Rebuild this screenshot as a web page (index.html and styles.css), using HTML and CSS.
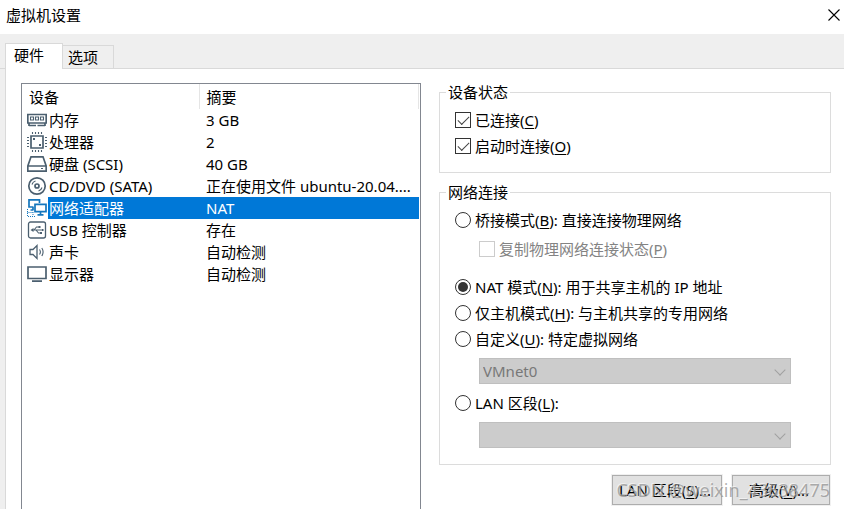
FILE: index.html
```html
<!DOCTYPE html>
<html lang="zh-CN">
<head>
    <meta charset="UTF-8">
    <meta name="viewport" content="width=device-width, initial-scale=1.0">
    <title>虚拟机设置</title>
    <link rel="stylesheet" href="styles.css">
</head>
<body>
    <div class="window">
        <header class="title-bar">
            <h1>虚拟机设置</h1>
            <button class="close-btn" type="button" aria-label="关闭">
                <svg width="12" height="12" viewBox="0 0 12 12"><path d="M0.5 0.5L11.5 11.5M11.5 0.5L0.5 11.5"/></svg>
            </button>
        </header>

        <nav class="tabs">
            <button class="tab active" type="button">硬件</button>
            <button class="tab" type="button">选项</button>
        </nav>

        <main class="panel">
            <!-- Device list -->
            <div class="device-list">
                <table>
                    <thead>
                        <tr><th class="col-device">设备</th><th>摘要</th></tr>
                    </thead>
                    <tbody>
                        <tr>
                            <td><div class="device">
                                <svg class="icon" viewBox="0 0 20 20"><path d="M0.800 4.500h18.400v8.500H0.800z"/><path class="thin" d="M3.500 7h3v3h-3zM8.500 7h3v3h-3zM13.500 7h3v3h-3z"/><path d="M2 15.500h7M10.500 15.500h7.500M2 13v3M18 13v3"/></svg>
                                <span>内存</span>
                            </div></td>
                            <td>3 GB</td>
                        </tr>
                        <tr>
                            <td><div class="device">
                                <svg class="icon" viewBox="0 0 20 20"><path d="M4 4h12v12H4z"/><path class="pins" d="M5.500 0v2M8.500 0v2M11.500 0v2M14.500 0v2M5.500 18v2M8.500 18v2M11.500 18v2M14.500 18v2M0 5.500h2M0 8.500h2M0 11.500h2M0 14.500h2M18 5.500h2M18 8.500h2M18 11.500h2M18 14.500h2"/><path class="fill" d="M6 6h2v2H6zM12 12h2v2h-2z"/></svg>
                                <span>处理器</span>
                            </div></td>
                            <td>2</td>
                        </tr>
                        <tr>
                            <td><div class="device">
                                <svg class="icon" viewBox="0 0 20 20"><path d="M0.800 12l3.200-9.200h12l3.200 9.200v5.200H0.800zM0.800 12h18.400"/><path class="thin" d="M14 14.500h2"/></svg>
                                <span>硬盘 (SCSI)</span>
                            </div></td>
                            <td>40 GB</td>
                        </tr>
                        <tr>
                            <td><div class="device">
                                <svg class="icon" viewBox="0 0 20 20"><circle cx="10" cy="10" r="8.200"/><circle cx="10" cy="10" r="2"/><path class="thin" d="M5 8.500a5 5 0 0 1 3.500-3.500M15 11.500a5 5 0 0 1-3.500 3.500"/></svg>
                                <span>CD/DVD (SATA)</span>
                            </div></td>
                            <td>正在使用文件 ubuntu-20.04....</td>
                        </tr>
                        <tr class="selected">
                            <td><div class="device">
                                <svg class="icon blue" viewBox="0 0 20 20"><path d="M6.500 9H2V1.800h10.500V5M6 9v3M3.500 12h3"/><path d="M8 6.300h11v7.400H8zM13.500 14v3M10.500 16.800h6"/><path class="dotted" d="M0.500 11v7.500H9M0.500 14.500h5.500M6 14v4"/></svg>
                                <span>网络适配器</span>
                            </div></td>
                            <td>NAT</td>
                        </tr>
                        <tr>
                            <td><div class="device">
                                <svg class="icon" viewBox="0 0 20 20"><rect class="frame" x="1.500" y="2" width="17" height="16" rx="2"/><path class="thin" d="M5 10h10.500M7 10l2.500-3H12M9 10l2.500 3H14"/><path class="fill" d="M3.500 10l3-2v4zM11.500 6h2v2h-2zM13 12h2v2h-2zM15 9h1.500v2H15z"/></svg>
                                <span>USB 控制器</span>
                            </div></td>
                            <td>存在</td>
                        </tr>
                        <tr>
                            <td><div class="device">
                                <svg class="icon" viewBox="0 0 20 20"><path class="frame" d="M3 7.500h3l4-4v13l-4-4H3z"/><path class="thin" d="M12.500 7.500q1.800 2.500 0 5M14.800 6q2.600 4 0 8"/></svg>
                                <span>声卡</span>
                            </div></td>
                            <td>自动检测</td>
                        </tr>
                        <tr>
                            <td><div class="device">
                                <svg class="icon" viewBox="0 0 20 20"><path d="M1 3h18v11.500H1zM5 17.200h10"/></svg>
                                <span>显示器</span>
                            </div></td>
                            <td>自动检测</td>
                        </tr>
                    </tbody>
                </table>
            </div>

            <!-- Settings for the selected device -->
            <form class="settings">
                <fieldset class="status-group">
                    <legend>设备状态</legend>
                    <label class="option"><input type="checkbox" checked><span>已连接(<u>C</u>)</span></label>
                    <label class="option"><input type="checkbox" checked><span>启动时连接(<u>O</u>)</span></label>
                </fieldset>

                <fieldset class="network-group">
                    <legend>网络连接</legend>
                    <label class="option"><input type="radio" name="network"><span>桥接模式(<u>B</u>): 直接连接物理网络</span></label>
                    <label class="option sub-option"><input type="checkbox" disabled><span>复制物理网络连接状态(<u>P</u>)</span></label>
                    <label class="option"><input type="radio" name="network" checked><span>NAT 模式(<u>N</u>): 用于共享主机的 IP 地址</span></label>
                    <label class="option"><input type="radio" name="network"><span>仅主机模式(<u>H</u>): 与主机共享的专用网络</span></label>
                    <label class="option"><input type="radio" name="network"><span>自定义(<u>U</u>): 特定虚拟网络</span></label>
                    <div class="select-box">
                        <select aria-label="特定虚拟网络" disabled><option>VMnet0</option></select>
                    </div>
                    <label class="option"><input type="radio" name="network"><span>LAN 区段(<u>L</u>):</span></label>
                    <div class="select-box">
                        <select aria-label="LAN 区段" disabled><option></option></select>
                    </div>
                </fieldset>

                <div class="actions">
                    <button class="btn btn-lan" type="button">LAN 区段(<u>S</u>)...</button>
                    <button class="btn" type="button">高级(<u>V</u>)...</button>
                    <span class="watermark">CSDN @weixin_43638475</span>
                </div>
            </form>
        </main>
    </div>
</body>
</html>
```
FILE: styles.css
```css
* {
    box-sizing: border-box;
}

body {
    margin: 0;
    font-family: "Noto Sans", "Noto Sans CJK SC", sans-serif;
    font-size: 15px;
    line-height: 20px;
    color: #000;
    background-color: #efefef;
}

button,
select {
    font: inherit;
    color: inherit;
}

u {
    text-underline-offset: 2px;
}

.window {
    display: flex;
    flex-direction: column;
    height: 100vh;
    min-width: 800px;
    overflow: hidden;
}

/* Title bar */
.title-bar {
    display: flex;
    justify-content: space-between;
    align-items: center;
    flex: none;
    height: 34px;
    padding: 0 4px 4px 6px;
    background-color: #fff;
}

.title-bar h1 {
    margin: 0;
    font-size: 15px;
    font-weight: normal;
}

.close-btn {
    display: flex;
    padding: 0;
    border: none;
    background: none;
}

.close-btn svg {
    stroke: #000;
    stroke-width: 1.1;
}

/* Tabs */
.tabs {
    display: flex;
    align-items: flex-end;
    flex: none;
    height: 35px;
    padding-left: 5px;
    box-shadow: inset 0 -1px #d9d9d9;
}

.tab {
    height: 24px;
    padding: 0 15px 0 5px;
    border: 1px solid #d9d9d9;
    border-left: none;
    background-color: #efefef;
}

.tab.active {
    height: 26px;
    padding: 0 18px 3px 8px;
    border-left: 1px solid #d9d9d9;
    border-bottom: none;
    background-color: #fff;
}

.panel {
    display: flex;
    align-items: stretch;
    flex: 1;
    gap: 18px;
    margin-left: 5px;
    padding: 14px 13px 0 15px;
    border-left: 1px solid #d9d9d9;
    background-color: #fff;
}

/* Device list */
.device-list {
    flex: 0 0 400px;
    padding-right: 1px;
    border: 1px solid #828790;
    border-bottom: none;
}

.device-list table {
    width: 100%;
    table-layout: fixed;
    border-collapse: collapse;
}

.device-list th {
    height: 25px;
    padding: 0 0 0 7px;
    font-weight: normal;
    text-align: left;
    border-right: 1px solid #e5e5e5;
}

.device-list .col-device {
    width: 177px;
}

.device-list td {
    height: 22px;
    padding: 0 0 0 7px;
    white-space: nowrap;
}

.device-list td:first-child {
    padding: 0 0 0 5px;
}

.device {
    display: flex;
    align-items: center;
    gap: 1px;
    height: 22px;
}

.device span {
    flex: 1;
    padding-left: 1px;
}

.selected td:last-child,
.selected .device span {
    color: #fff;
    background-color: #0078d7;
}

.selected .device span {
    line-height: 22px;
}

.icon {
    flex: none;
    width: 20px;
    height: 20px;
    fill: none;
    stroke: #4b5f6f;
    stroke-width: 1.7;
}

.icon .frame {
    stroke-width: 1.3;
}

.icon .thin,
.icon .pins {
    stroke-width: 1.1;
}

.icon .fill {
    fill: #4b5f6f;
    stroke: none;
}

.icon.blue {
    stroke: #1476bd;
}

.icon .dotted {
    stroke-width: 1;
    stroke-dasharray: 1 1;
}

/* Settings */
.settings {
    flex: 1;
    min-width: 0;
}

fieldset {
    margin: 0 0 10px;
    padding: 6px 15px 13px;
    border: 1px solid #dcdcdc;
}

.network-group {
    padding-bottom: 10px;
}

legend {
    height: 18px;
    margin-left: -9px;
    padding: 0 2px;
    line-height: 18px;
}

.option {
    display: flex;
    align-items: center;
    gap: 4px;
    height: 26px;
    white-space: nowrap;
}

.sub-option {
    margin: 3px 0 12px 24px;
    color: #838383;
}

input {
    appearance: none;
    display: grid;
    place-items: center;
    flex: none;
    width: 16px;
    height: 16px;
    margin: 0;
    border: 1px solid #333;
    background-color: #fff;
}

input:disabled {
    border-color: #ccc;
}

input[type="radio"] {
    border-radius: 50%;
}

input[type="radio"]:checked::before {
    content: "";
    width: 10px;
    height: 10px;
    border-radius: 50%;
    background-color: #333;
}

input[type="checkbox"]:checked::before {
    content: "";
    width: 10px;
    height: 5px;
    margin-bottom: 3px;
    border: solid #444;
    border-width: 0 0 1px 1px;
    transform: rotate(-45deg);
}

.select-box {
    position: relative;
    margin: 6px 24px;
}

.select-box select {
    appearance: none;
    display: block;
    width: 100%;
    height: 26px;
    padding: 0 3px;
    border: 1px solid #bfbfbf;
    border-radius: 0;
    color: #787878;
    background-color: #ccc;
    opacity: 1;
}

.select-box::after {
    content: "";
    position: absolute;
    top: 8px;
    right: 7px;
    width: 7px;
    height: 7px;
    border: solid #a0a0a0;
    border-width: 0 1px 1px 0;
    transform: rotate(45deg);
}

.actions {
    position: relative;
    display: flex;
    justify-content: flex-end;
    gap: 10px;
    padding-right: 1px;
}

.btn {
    width: 98px;
    height: 30px;
    padding: 0 4px 0 0;
    border: 1px solid #adadad;
    background-color: #e1e1e1;
    box-shadow: 0 0 0 1px #f0f0f0;
    white-space: nowrap;
}

.btn-lan {
    width: 110px;
}

.watermark {
    position: absolute;
    right: 1px;
    top: 4px;
    font-size: 18px;
    line-height: 22px;
    color: rgba(140, 140, 140, 0.7);
    text-shadow: -1px -1px rgba(255, 255, 255, 0.5);
    white-space: nowrap;
    pointer-events: none;
}
```
